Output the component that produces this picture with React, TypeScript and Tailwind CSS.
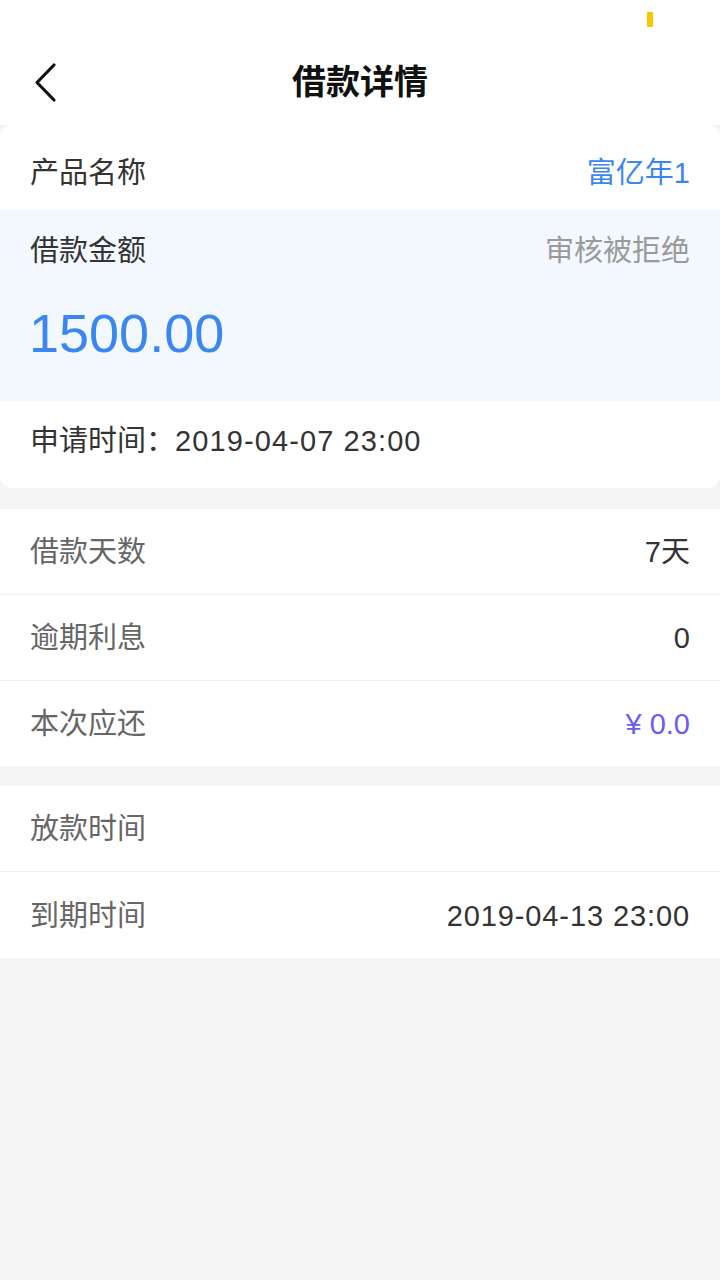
import React from "react";

function Row({
  label,
  value,
  labelClass = "text-[#666666]",
  valueClass = "text-[#333333]",
  border = false,
  h = "h-[86px]",
  extra = "pt-[3px]",
}: {
  label: string;
  value?: string;
  labelClass?: string;
  valueClass?: string;
  border?: boolean;
  h?: string;
  extra?: string;
}) {
  return (
    <div
      className={`flex items-center justify-between px-[30px] ${h} ${extra} ${
        border ? "border-t border-[#f0f0f0]" : ""
      }`}
    >
      <span className={`text-[29px] ${labelClass}`}>{label}</span>
      {value !== undefined && (
        <span className={`text-[29px] ${valueClass}`}>{value}</span>
      )}
    </div>
  );
}

export default function App() {
  return (
    <div className="min-h-[1280px] w-[720px] bg-[#f5f5f5] font-['Liberation_Sans','Noto_Sans_CJK_SC',sans-serif]">
      {/* status + header */}
      <div className="bg-white">
        <div className="flex h-[40px] justify-end pr-[67px] pt-[12px]">
          <div className="h-[15px] w-[6px] rounded-[1px] bg-[#f7c600]" />
        </div>
        <div className="relative flex h-[85px] items-center justify-center">
          <svg
            className="absolute left-[30px] top-[20px]"
            width="30"
            height="44"
            viewBox="0 0 30 44"
          >
            <path
              d="M24 5 L7 22.5 L24 40"
              fill="none"
              stroke="#111111"
              strokeWidth="3.2"
              strokeLinecap="round"
              strokeLinejoin="round"
            />
          </svg>
          <span className="text-[34px] font-bold text-[#111111]">借款详情</span>
        </div>
      </div>

      {/* card 1 */}
      <div className="overflow-hidden rounded-[12px] bg-white">
        <Row
          label="产品名称"
          value="富亿年1"
          labelClass="text-[#333333]"
          valueClass="text-[#3a87f0]"
          h="h-[85px]"
          extra="pt-[12px]"
        />
        <div className="flex flex-col bg-[#f3f8fe]">
          <div className="flex h-[80px] items-center justify-between px-[30px] pt-[3px]">
            <span className="text-[29px] text-[#333333]">借款金额</span>
            <span className="text-[29px] text-[#9a9a9a]">审核被拒绝</span>
          </div>
          <div className="mb-[41px] mt-[16px] px-[29px] text-[54px] leading-[54px] text-[#3a87f0]">
            1500.00
          </div>
        </div>
        <div className="mb-[7px] flex h-[80px] items-center px-[30px] pt-[2px]">
          <span className="text-[29px] text-[#333333]">申请时间：</span>
          <span className="text-[29px] tracking-[1.1px] text-[#333333]">
            2019-04-07 23:00
          </span>
        </div>
      </div>

      {/* card 2 */}
      <div className="mt-[21px] bg-white">
        <Row label="借款天数" value="7天" h="h-[85px]" />
        <Row label="逾期利息" value="0" border />
        <Row label="本次应还" value="¥ 0.0" valueClass="text-[#6b5cf0]" border />
      </div>

      {/* card 3 */}
      <div className="mt-[20px] bg-white">
        <Row label="放款时间" h="h-[85px]" />
        <Row
          label="到期时间"
          value="2019-04-13 23:00"
          valueClass="text-[#333333] tracking-[0.9px]"
          border
          h="h-[87px]"
        />
      </div>
    </div>
  );
}
